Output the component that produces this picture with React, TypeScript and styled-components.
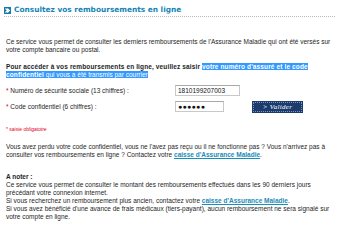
import styled, { createGlobalStyle } from "styled-components";

const Global = createGlobalStyle`
  html, body { margin: 0; padding: 0; background: #fff; }
  body {
    width: 350px;
    height: 228px;
    overflow: hidden;
    font-family: "Liberation Sans", Arial, sans-serif;
    font-size: 6.5px;
    line-height: 8px;
    color: #1e1e1e;
  }
`;

const Page = styled.div`
  padding: 0 0 0 6px;
`;

const Header = styled.div`
  display: flex;
  align-items: center;
  gap: 3px;
  height: 12px;
  padding-top: 4px;
  margin: 0 15px 0 -2px;
  border-bottom: 1px dotted #b8b8b8;
`;

const TitleIcon = styled.svg`
  width: 7px;
  height: 7px;
  flex: none;
`;

const Title = styled.h1`
  margin: 0;
  font-family: "DejaVu Sans", Verdana, sans-serif;
  font-size: 7.4px;
  line-height: 10px;
  font-weight: bold;
  color: #1684b4;
  white-space: nowrap;
`;

const Para = styled.p<{ $top: number }>`
  margin: ${(p) => p.$top}px 0 0;
  white-space: nowrap;
`;

const Bold = styled.b<{ $wide?: boolean }>`
  font-weight: bold;
  letter-spacing: ${(p) => (p.$wide ? "0.13px" : "0")};
`;

const Selected = styled.span`
  background: #3399ff;
  color: #fff;
`;

const Form = styled.div`
  margin-top: 6px;
  display: grid;
  grid-template-columns: 169px auto;
  row-gap: 5px;
  align-items: center;
`;

const Label = styled.label`
  white-space: nowrap;
`;

const Star = styled.span`
  color: #e2001a;
`;

const FieldCell = styled.div`
  display: flex;
  align-items: center;
  gap: 29px;
`;

const Input = styled.div<{ $w: number }>`
  box-sizing: border-box;
  width: ${(p) => p.$w}px;
  height: 11px;
  border: 1px solid #c8c8c8;
  border-top-color: #a8a8a8;
  padding: 0 2px;
  font-size: 6.5px;
  line-height: 9px;
  color: #111;
  background: #fff;
`;

const Dots = styled.span`
  font-size: 7px;
  letter-spacing: 0.3px;
`;

const Button = styled.button`
  box-sizing: border-box;
  width: 49px;
  height: 10px;
  padding: 0;
  margin: 0;
  background: #1b3b6f;
  border: 1px dotted #7d93bb;
  outline: 1px solid #1b3b6f;
  color: #fff;
  font-family: "Liberation Serif", serif;
  font-style: italic;
  font-size: 7px;
  line-height: 8px;
  letter-spacing: 0.3px;
  text-align: center;
`;

const Required = styled.p`
  margin: 13px 0 0;
  color: #e2001a;
  font-size: 5px;
`;

const Link = styled.a`
  color: #1a8cb8;
  font-weight: bold;
  text-decoration: underline;
`;

export default function App() {
  return (
    <>
      <Global />
      <Page>
        <Header>
          <TitleIcon viewBox="0 0 7 7">
            <rect width="7" height="7" fill="#1478a8" />
            <path d="M1.5 1.5 L3.6 3.5 L1.5 5.5 M3.3 1.5 L5.4 3.5 L3.3 5.5" stroke="#fff" strokeWidth="1.1" fill="none" />
          </TitleIcon>
          <Title>Consultez vos remboursements en ligne</Title>
        </Header>

        <Para $top={21}>
          Ce service vous permet de consulter les derniers remboursements de l'Assurance Maladie qui ont été versés sur
          <br />
          votre compte bancaire ou postal.
        </Para>

        <Para $top={9}>
          <Bold $wide>Pour accéder à vos remboursements en ligne, veuillez saisir </Bold>
          <Selected>
            <Bold $wide>votre numéro d'assuré et le code</Bold>
            <br />
            <Bold $wide>confidentiel</Bold> qui vous a été transmis par courrier
          </Selected>
        </Para>

        <Form>
          <Label>
            <Star>* </Star>Numéro de sécurité sociale (13 chiffres) :
          </Label>
          <FieldCell>
            <Input $w={65}>1810199207003</Input>
          </FieldCell>
          <Label>
            <Star>* </Star>Code confidentiel (6 chiffres) :
          </Label>
          <FieldCell>
            <Input $w={49}>
              <Dots>●●●●●●</Dots>
            </Input>
            <Button>&gt; Valider</Button>
          </FieldCell>
        </Form>

        <Required>* saisie obligatoire</Required>

        <Para $top={10}>
          Vous avez perdu votre code confidentiel, vous ne l'avez pas reçu ou il ne fonctionne pas ? Vous n'arrivez pas à
          <br />
          consulter vos remboursements en ligne ? Contactez votre <Link>caisse d'Assurance Maladie</Link>.
        </Para>

        <Para $top={14}>
          <Bold>A noter :</Bold>
          <br />
          Ce service vous permet de consulter le montant des remboursements effectués dans les 90 derniers jours
          <br />
          précédant votre connexion internet.
          <br />
          Si vous recherchez un remboursement plus ancien, contactez votre <Link>caisse d'Assurance Maladie</Link>.
          <br />
          Si vous avez bénéficié d'une avance de frais médicaux (tiers-payant), aucun remboursement ne sera signalé sur
          <br />
          votre compte en ligne.
        </Para>
      </Page>
    </>
  );
}
